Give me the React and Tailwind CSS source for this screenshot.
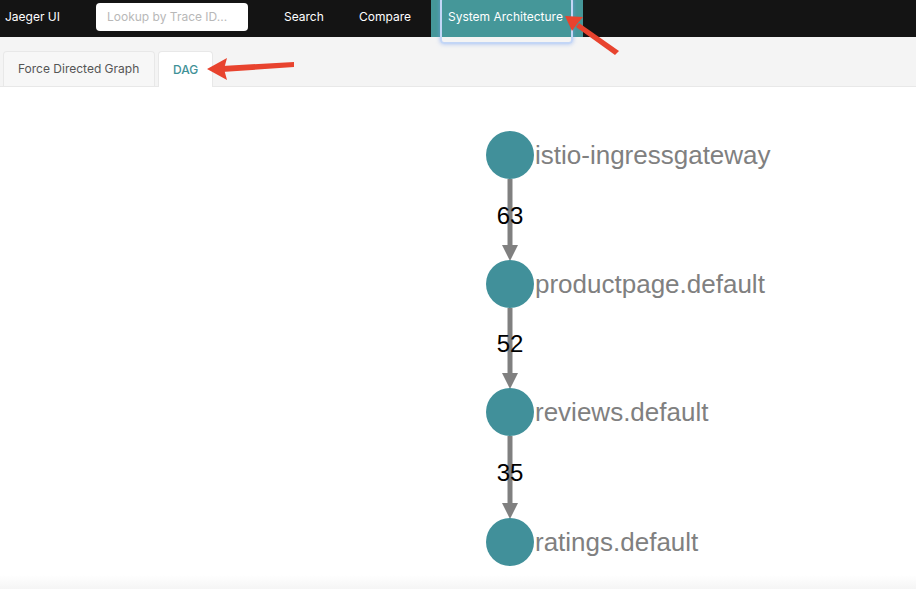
import React from 'react';

const nodes = [
  { y: 155, name: 'istio-ingressgateway' },
  { y: 284, name: 'productpage.default' },
  { y: 412, name: 'reviews.default' },
  { y: 542, name: 'ratings.default' },
];
const edges = ['63', '52', '35'];

const DagGraph = () => {
  const off = 87;
  const cx = 510;
  const r = 24;
  return (
    <svg width="916" height="488" className="block">
      {edges.map((label, i) => {
        const y1 = nodes[i].y - off + r;
        const y2 = nodes[i + 1].y - off - r;
        return (
          <g key={label}>
            <line x1={cx} y1={y1} x2={cx} y2={y2 - 12} stroke="#808080" strokeWidth="5" />
            <polygon points={`${cx - 8},${y2 - 15} ${cx + 8},${y2 - 15} ${cx},${y2 + 1}`} fill="#808080" />
            <text
              x={cx}
              y={(y1 + y2) / 2 + 4}
              textAnchor="middle"
              fontSize="24"
              fill="#000"
              fontFamily="'Liberation Sans', Arial, sans-serif"
            >
              {label}
            </text>
          </g>
        );
      })}
      {nodes.map((n) => (
        <g key={n.name}>
          <circle cx={cx} cy={n.y - off} r={r} fill="#41909a" />
          <text
            x={535}
            y={n.y - off + 9}
            fontSize="26"
            fill="#808080"
            fontFamily="'Liberation Sans', Arial, sans-serif"
          >
            {n.name}
          </text>
        </g>
      ))}
    </svg>
  );
};

const Annotations = () => (
  <svg width="916" height="589" className="absolute left-0 top-0 pointer-events-none">
    <polygon points="294,62 294,67 222,72 222,66" fill="#e8432e" />
    <polygon points="207,69 227,58 224,69 227,80" fill="#e8432e" />
    <polygon points="619,51 615,55 576,27 579,23" fill="#e8432e" />
    <polygon points="565,16 583,17 577,24 572,31" fill="#e8432e" />
  </svg>
);

const App = () => {
  return (
    <div
      className="relative w-[916px] h-[589px] bg-white overflow-hidden"
      style={{ fontFamily: "Inter, 'Liberation Sans', Arial, sans-serif" }}
    >
      <header className="flex items-center h-[37px] bg-[#141414] text-white text-[12px] whitespace-nowrap">
        <div className="pl-[5px] w-[96px] pb-[3px]">Jaeger UI</div>
        <div className="w-[152px] h-[28px] mb-[3px] bg-white rounded-[4px] flex items-center px-[11px] text-[#b8b8b8]">
          Lookup by Trace ID...
        </div>
        <div className="ml-[36px] w-[75px] pb-[3px]">Search</div>
        <div className="w-[72px] pb-[3px]">Compare</div>
        <div className="relative h-full w-[152px] bg-[#459799] flex items-center pl-[17px] pb-[3px]">
          System Architecture
          <div className="absolute left-[9px] right-[10px] top-[-3px] bottom-[-7px] border-2 border-[#c3d6f6] rounded-[4px] shadow-[0_0_4px_rgba(120,160,240,0.6)]" />
        </div>
      </header>
      <div className="flex items-end h-[50px] bg-[#f4f4f4] border-b border-[#e8e8e8] pl-[3px] gap-[3px] text-[12px] whitespace-nowrap">
        <div className="h-[35px] w-[152px] pl-[14px] flex items-center bg-[#f7f7f7] border border-b-0 border-[#e8e8e8] rounded-t-[4px] text-[#555]">
          Force Directed Graph
        </div>
        <div className="h-[36px] w-[55px] -mb-px pl-[14px] flex items-center bg-white border border-b-0 border-[#e8e8e8] rounded-t-[4px] text-[#3f9197] font-medium">
          DAG
        </div>
      </div>
      <DagGraph />
      <div className="absolute left-0 right-0 bottom-0 h-[14px] bg-gradient-to-b from-white to-[#f5f5f5]" />
      <Annotations />
    </div>
  );
};

export default App;
